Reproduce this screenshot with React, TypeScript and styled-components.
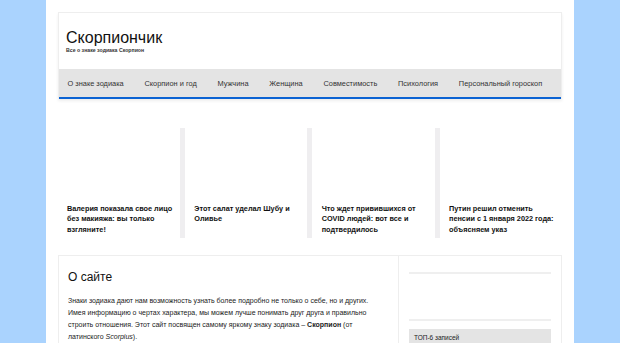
import styled, { createGlobalStyle } from 'styled-components';

const GlobalStyle = createGlobalStyle`
  body {
    margin: 0;
    background: #aad3fe;
    font-family: 'Liberation Sans', Arial, sans-serif;
    color: #222;
  }
`;

const Page = styled.div`
  width: 528px;
  margin: 0 auto;
  padding: 12px;
  box-sizing: border-box;
  min-height: 343px;
  background: #fff;
`;

const Header = styled.header`
  border: 1px solid #eeeeee;
  border-bottom: none;
  box-shadow: 0 2px 3px rgba(0, 0, 0, 0.07);
`;

const Brand = styled.div`
  height: 56px;
  box-sizing: border-box;
  padding: 15px 7px 0;
`;

const SiteTitle = styled.div`
  font-size: 16px;
  line-height: 19px;
  color: #111;
`;

const Tagline = styled.div`
  font-size: 5.2px;
  line-height: 7px;
  font-weight: bold;
  color: #333;
`;

const Nav = styled.nav`
  display: flex;
  height: 28px;
  background: #e4e4e4;
  border-bottom: 2px solid #0b63d3;
`;

const NavItem = styled.a`
  display: flex;
  align-items: center;
  padding: 0 10.4px;
  font-size: 7.4px;
  white-space: nowrap;
  color: #333;
  text-decoration: none;

  &:first-child {
    padding-left: 8.5px;
  }
`;

const Cards = styled.div`
  display: grid;
  grid-template-columns: repeat(4, 1fr);
  gap: 5.3px;
  margin-top: 29px;
`;

const Card = styled.div<{ $last?: boolean }>`
  height: 110px;
  padding: 75.5px 5px 0 9px;
  box-sizing: border-box;
  background: #fff;
  box-shadow: ${(p) => (p.$last ? 'none' : '5px 0 0 #efeef0')};
`;

const CardTitle = styled.div`
  font-size: 7.3px;
  line-height: 10.5px;
  font-weight: bold;
  color: #111;
`;

const Bottom = styled.div`
  display: grid;
  grid-template-columns: 339px 1fr;
  margin-top: 17px;
  border: 1px solid #eeeeee;
  border-bottom: none;
`;

const About = styled.section`
  padding: 14px 18px 0 9px;
`;

const AboutTitle = styled.h2`
  margin: 0 0 10px;
  font-size: 12px;
  line-height: 15px;
  font-weight: normal;
  color: #111;
`;

const Text = styled.p`
  margin: 0;
  font-size: 7px;
  line-height: 12px;
  color: #222;
`;

const Sidebar = styled.aside`
  border-left: 1px solid #eeeeee;
  padding: 16px 10px 0;
`;

const Rule = styled.div<{ $gap: number }>`
  height: 2px;
  background: #efefef;
  margin-bottom: ${(p) => p.$gap}px;
`;

const WidgetTitle = styled.div`
  background: #e4e4e4;
  padding: 5px;
  font-size: 6.5px;
  color: #222;
`;

const navItems = [
  'О знаке зодиака',
  'Скорпион и год',
  'Мужчина',
  'Женщина',
  'Совместимость',
  'Психология',
  'Персональный гороскоп',
];

const cards = [
  'Валерия показала свое лицо без макияжа: вы только взгляните!',
  'Этот салат уделал Шубу и Оливье',
  'Что ждет привившихся от COVID людей: вот все и подтвердилось',
  'Путин решил отменить пенсии с 1 января 2022 года: объясняем указ',
];

export default function App() {
  return (
    <>
      <GlobalStyle />
      <Page>
        <Header>
          <Brand>
            <SiteTitle>Скорпиончик</SiteTitle>
            <Tagline>Все о знаке зодиака Скорпион</Tagline>
          </Brand>
          <Nav>
            {navItems.map((item) => (
              <NavItem key={item} href="#">
                {item}
              </NavItem>
            ))}
          </Nav>
        </Header>

        <Cards>
          {cards.map((title, i) => (
            <Card key={title} $last={i === cards.length - 1}>
              <CardTitle>{title}</CardTitle>
            </Card>
          ))}
        </Cards>

        <Bottom>
          <About>
            <AboutTitle>О сайте</AboutTitle>
            <Text>
              Знаки зодиака дают нам возможность узнать более подробно не только о себе, но и других.
              Имея информацию о чертах характера, мы можем лучше понимать друг друга и правильно
              строить отношения. Этот сайт посвящен самому яркому знаку зодиака – <b>Скорпион</b> (от
              латинского <i>Scorpius</i>).
            </Text>
          </About>
          <Sidebar>
            <Rule $gap={45} />
            <Rule $gap={8} />
            <WidgetTitle>ТОП-6 записей</WidgetTitle>
          </Sidebar>
        </Bottom>
      </Page>
    </>
  );
}
